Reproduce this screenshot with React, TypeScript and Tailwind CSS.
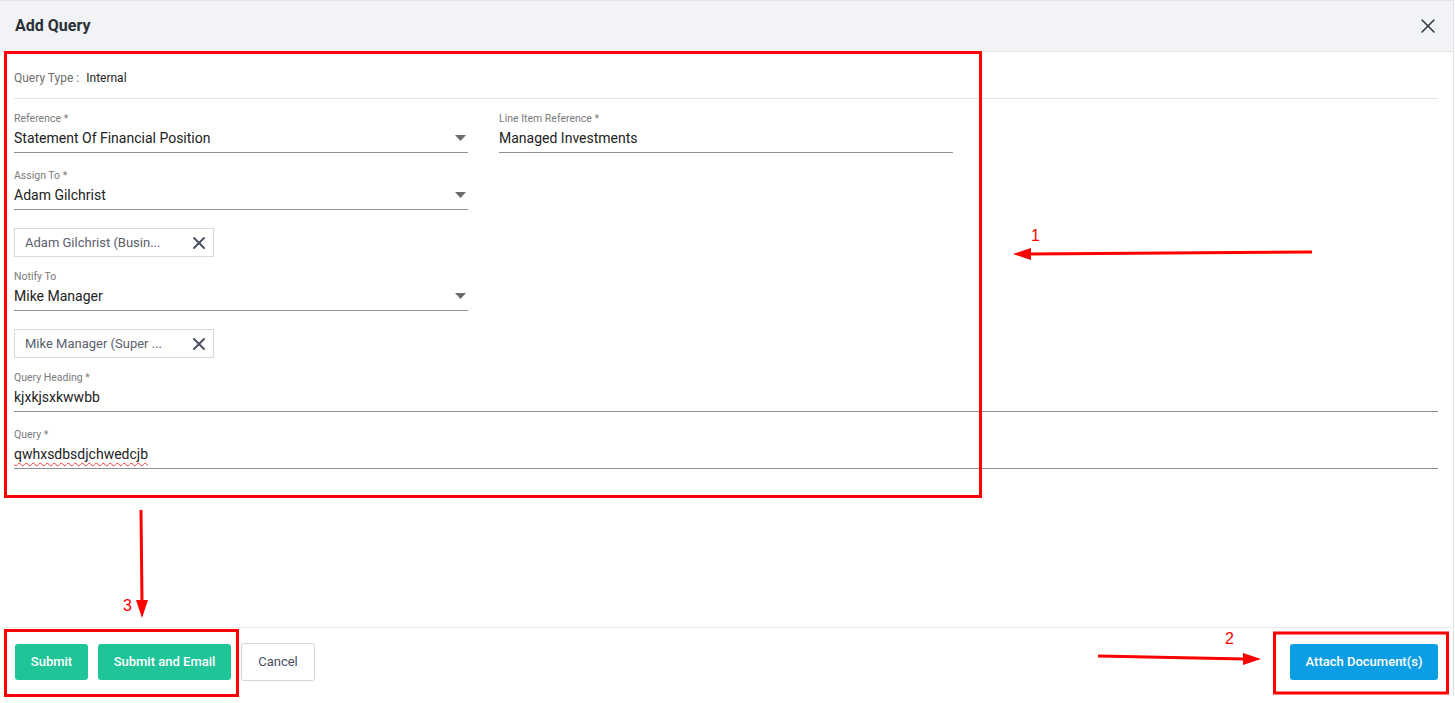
import { X } from 'lucide-react';

interface FieldProps {
  label: string;
  value: string;
  select?: boolean;
  wavy?: boolean;
}

function Caret() {
  return (
    <svg width="11" height="6" viewBox="0 0 11 6" className="shrink-0 mr-[2px]">
      <path d="M0 0 L11 0 L5.5 6 Z" fill="#6b6b6b" />
    </svg>
  );
}

function Field({ label, value, select, wavy }: FieldProps) {
  return (
    <div className="flex flex-col">
      <span className="text-[10.5px] leading-[14px] text-[#7a7a7a]">{label}</span>
      <div className="flex items-center justify-between mt-[2px] pb-[4px] border-b border-[#8f8f8f]">
        <span
          className={
            wavy
              ? 'text-[14px] leading-5 text-[#222] underline decoration-wavy decoration-[#f03a3a] underline-offset-[3px] decoration-1'
              : 'text-[14px] leading-5 text-[#222]'
          }
        >
          {value}
        </span>
        {select && <Caret />}
      </div>
    </div>
  );
}

function Chip({ text }: { text: string }) {
  return (
    <div className="flex items-center justify-between w-[200px] h-[29px] pl-[10px] pr-[4px] border border-[#d6d9de]">
      <span className="text-[13px] text-[#5b606b] whitespace-nowrap">{text}</span>
      <X size={20} strokeWidth={2.3} className="text-[#4a5060] shrink-0" />
    </div>
  );
}

// red review marks drawn over the captured dialog
function Annotations() {
  return (
    <svg
      className="absolute inset-0 pointer-events-none"
      width="1455"
      height="703"
      viewBox="0 0 1455 703"
    >
      <g fill="none" stroke="#ff0000" strokeWidth="3">
        <rect x="5.5" y="52.5" width="975" height="444" />
        <rect x="5.5" y="630.5" width="232" height="65" />
        <rect x="1274.5" y="633" width="173" height="60" />
        <line x1="1312" y1="252" x2="1028" y2="254" />
        <line x1="141" y1="510" x2="142" y2="602" />
        <line x1="1098" y1="656" x2="1245" y2="659" />
      </g>
      <g fill="#ff0000">
        <polygon points="1013,254 1031,248 1031,260" />
        <polygon points="142,618 136,600 148,600" />
        <polygon points="1261,659 1243,653 1243,665" />
      </g>
      <g fill="#ff0000" fontFamily="'Liberation Sans', Arial, sans-serif" fontSize="16">
        <text x="1031" y="241">1</text>
        <text x="123" y="611">3</text>
        <text x="1225" y="644">2</text>
      </g>
    </svg>
  );
}

export default function App() {
  return (
    <div className="relative w-[1455px] h-[703px] bg-white font-['Roboto','Liberation_Sans',sans-serif] overflow-hidden">
      <div className="flex flex-col w-[1454px] h-[696px] border-t border-r border-[#e2e4e8]">
        {/* Header */}
        <div className="flex items-center justify-between h-[51px] pl-[15px] pr-[13px] bg-[#f1f3f6] border-b border-[#e2e4e8] shrink-0">
          <span className="text-[16px] font-bold text-[#2b2f36]">Add Query</span>
          <X size={24} strokeWidth={1.6} className="text-[#333a44]" />
        </div>

        {/* Body */}
        <div className="flex-1 pl-[14px] pr-[15px]">
          <div className="flex items-center gap-[7px] pt-[18px] pb-[12px] border-b border-[#e2e2e2] text-[12px] leading-4">
            <span className="text-[#6e6e6e]">Query Type :</span>
            <span className="text-[#222]">Internal</span>
          </div>

          <div className="grid grid-cols-[454px_454px] gap-x-[31px] mt-[13px]">
            <div className="flex flex-col">
              <Field label="Reference *" value="Statement Of Financial Position" select />
              <div className="mt-[16px]">
                <Field label="Assign To *" value="Adam Gilchrist" select />
              </div>
              <div className="mt-[18px]">
                <Chip text="Adam Gilchrist (Busin..." />
              </div>
              <div className="mt-[13px]">
                <Field label="Notify To" value="Mike Manager" select />
              </div>
              <div className="mt-[18px]">
                <Chip text="Mike Manager (Super ..." />
              </div>
            </div>
            <div>
              <Field label="Line Item Reference *" value="Managed Investments" />
            </div>
          </div>

          <div className="mt-[13px]">
            <Field label="Query Heading *" value="kjxkjsxkwwbb" />
          </div>
          <div className="mt-[16px]">
            <Field label="Query *" value="qwhxsdbsdjchwedcjb" wavy />
          </div>
        </div>

        {/* Footer */}
        <div className="flex items-center justify-between h-[69px] px-[15px] border-t border-[#e8e9ec] shrink-0">
          <div className="flex items-center gap-[10px]">
            <button className="h-[36px] w-[73px] rounded-[3px] bg-[#1fc598] text-white text-[13px] font-medium">
              Submit
            </button>
            <button className="h-[36px] w-[133px] rounded-[3px] bg-[#1fc598] text-white text-[13px] font-medium">
              Submit and Email
            </button>
            <button className="h-[38px] w-[74px] rounded-[3px] border border-[#d3d5da] bg-white text-[#474d63] text-[13px]">
              Cancel
            </button>
          </div>
          <button className="h-[36px] w-[148px] rounded-[3px] bg-[#0c9ee5] text-white text-[13px] font-medium">
            Attach Document(s)
          </button>
        </div>
      </div>
      <Annotations />
    </div>
  );
}
